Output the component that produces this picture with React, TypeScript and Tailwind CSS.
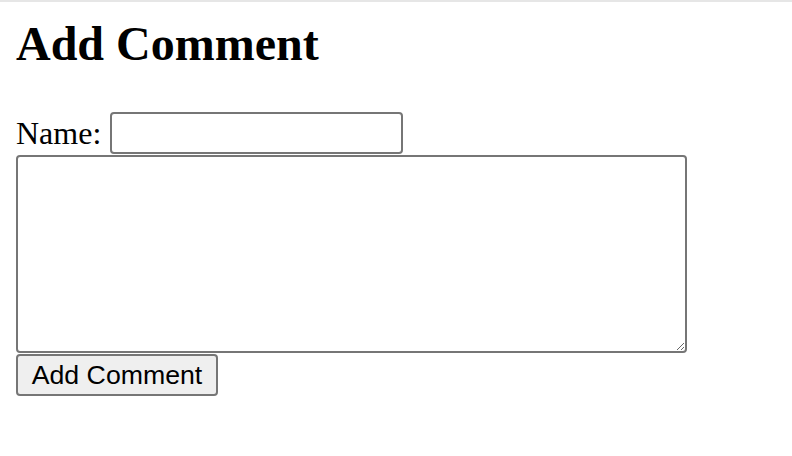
import React, { useState } from "react";

function NameField({
  name,
  setName,
}: {
  name: string;
  setName: React.Dispatch<React.SetStateAction<string>>;
}) {
  return (
    <div className="mt-[44px] flex items-center gap-[9px]">
      <label htmlFor="name" className="text-[32px] leading-none">
        Name:
      </label>
      <input
        id="name"
        type="text"
        value={name}
        onChange={(e) => setName(e.target.value)}
        className="h-[42px] w-[293px] rounded-[4px] border-2 border-[#767676] bg-white px-1 text-[27px] outline-none"
      />
    </div>
  );
}

export default function App() {
  const [name, setName] = useState("");
  const [comment, setComment] = useState("");

  return (
    <div className="min-h-[456px] w-full border-t-2 border-[#e6e6e6] bg-white px-4 font-['Liberation_Serif',serif] text-black">
      <h1 className="mt-[18px] text-[48px] font-bold leading-none">
        Add Comment
      </h1>
      <form
        className="flex flex-col items-start"
        onSubmit={(e) => e.preventDefault()}
      >
        <NameField name={name} setName={setName} />
        <textarea
          value={comment}
          onChange={(e) => setComment(e.target.value)}
          className="mt-[1px] h-[198px] w-[671px] rounded-[4px] border-2 border-[#767676] bg-white p-1 text-[27px] outline-none"
        />
        <button
          type="submit"
          className="mt-[1px] h-[42px] w-[202px] rounded-[4px] border-2 border-[#767676] bg-[#efefef] font-['Liberation_Sans',Arial,sans-serif] text-[26.7px] leading-none text-black"
        >
          Add Comment
        </button>
      </form>
    </div>
  );
}
